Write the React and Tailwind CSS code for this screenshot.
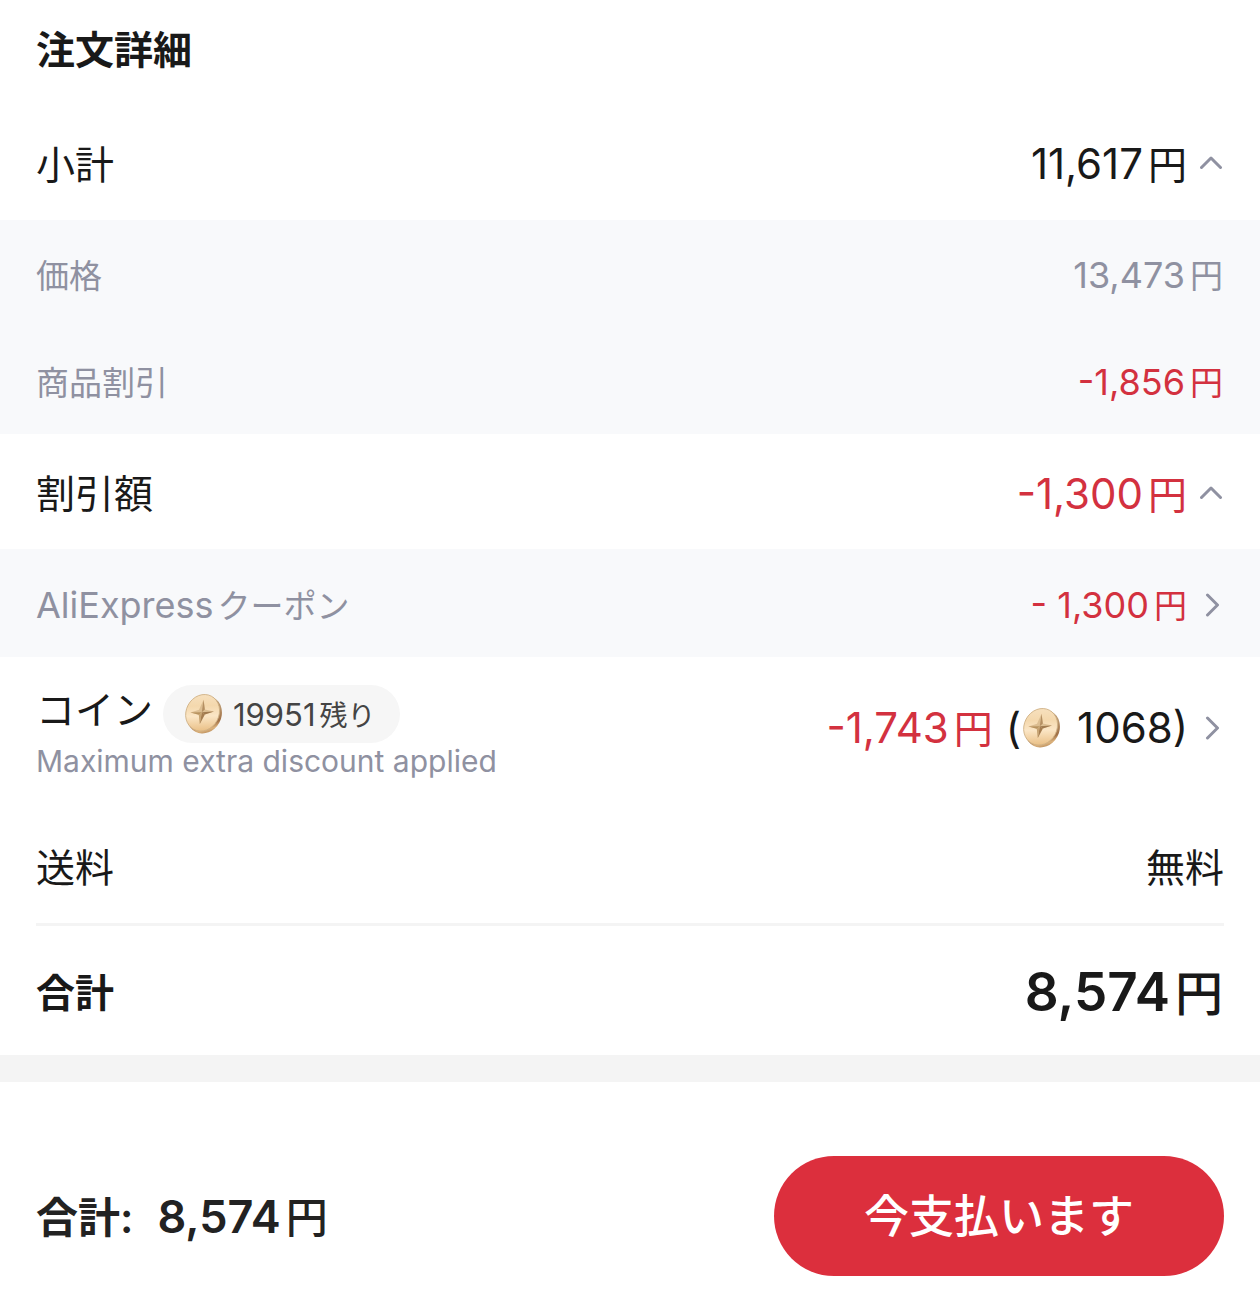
import React, { useId, useState } from 'react';

const CoinIcon = () => {
  const id = useId();

  return (
    <svg viewBox="0 0 40 42" className="h-[42px] w-10 shrink-0" aria-hidden="true">
      <defs>
        <linearGradient id={`${id}-edge`} x1="0.1" y1="0" x2="0.9" y2="1">
          <stop offset="0" stopColor="#b9a180" />
          <stop offset="0.45" stopColor="#b8946b" />
          <stop offset="0.7" stopColor="#a07046" />
          <stop offset="0.82" stopColor="#dcb27c" />
          <stop offset="1" stopColor="#94673c" />
        </linearGradient>
        <linearGradient id={`${id}-face`} x1="0.2" y1="0" x2="0.7" y2="1">
          <stop offset="0" stopColor="#f7e2c2" />
          <stop offset="0.35" stopColor="#f4d8ad" />
          <stop offset="0.6" stopColor="#fbe6c6" />
          <stop offset="1" stopColor="#e8bc80" />
        </linearGradient>
      </defs>
      {/* edge */}
      <ellipse cx="21.4" cy="21.6" rx="17" ry="19.4" transform="rotate(28 21.4 21.6)" fill={`url(#${id}-edge)`} />
      {/* face */}
      <ellipse cx="19.6" cy="19.8" rx="16.4" ry="18.8" transform="rotate(28 19.6 19.8)" fill={`url(#${id}-face)`} stroke="#cfb084" strokeWidth="0.8" />
      {/* star */}
      <path d="M20.6 6.8 L21.8 16.4 L31 18.6 L21.8 21.6 L16.8 31 L15.8 21.8 L7.4 19.4 L16 16.8 Z" fill="#dcbe92" />
      <path d="M20.6 6.8 L21.8 16.4 L18.8 19.2 Z" fill="#b48f62" />
      <path d="M31 18.6 L21.8 21.6 L18.8 19.2 Z" fill="#a07a4f" />
      <path d="M7.4 19.4 L15.8 21.8 L18.8 19.2 Z" fill="#b8935f" />
      <path d="M16.8 31 L21.8 21.6 L18.8 19.2 Z" fill="#a57d50" />
      <path d="M16.8 31 L15.8 21.8 L18.8 19.2 Z" fill="#c7a473" />
    </svg>
  );
};

const ChevronUp = ({ open = true }) => (
  <svg
    viewBox="0 0 24 24"
    className={`h-6 w-6 shrink-0 ${open ? '' : 'rotate-180'}`}
    fill="none"
    stroke="#8f91a1"
    strokeWidth="3"
    strokeLinecap="round"
    strokeLinejoin="round"
    aria-hidden="true"
  >
    <path d="M1.5 15.5 L11 6 L20.5 15.5" />
  </svg>
);

const ChevronRight = () => (
  <svg
    viewBox="0 0 24 24"
    className="h-6 w-6 shrink-0"
    fill="none"
    stroke="#8f91a1"
    strokeWidth="3"
    strokeLinecap="round"
    strokeLinejoin="round"
    aria-hidden="true"
  >
    <path d="M7.5 2 L17.5 12 L7.5 22" />
  </svg>
);

const Amount = ({ value, className, unitClass }) => (
  <span className={`flex items-baseline gap-[5px] pr-px whitespace-pre ${className}`}>
    <span>{value}</span>
    <span className={unitClass}>円</span>
  </span>
);

const SubRow = ({ label, children }) => (
  <div className="flex h-[107px] items-baseline justify-between px-9 pt-[37px] text-[#8f91a1]">
    <span className="text-[33px]">{label}</span>
    {children}
  </div>
);

const App = () => {
  const [subtotalOpen, setSubtotalOpen] = useState(true);
  const [discountOpen, setDiscountOpen] = useState(true);

  return (
    <main
      lang="ja"
      className="bg-white font-['Inter','Noto_Sans_CJK_JP',sans-serif] leading-none text-[#191919]"
    >
      <section>
        <h1 className="flex h-[108px] items-center px-9 pb-2.5 text-[39px] font-bold">注文詳細</h1>

        {/* Subtotal */}
        <button
          type="button"
          aria-expanded={subtotalOpen}
          onClick={() => setSubtotalOpen(!subtotalOpen)}
          className="flex h-[112px] w-full items-center justify-between px-9"
        >
          <span className="text-[39px]">小計</span>
          <span className="flex items-center gap-3">
            <Amount value="11,617" className="text-[42px]" unitClass="text-[39px]" />
            <ChevronUp open={subtotalOpen} />
          </span>
        </button>
        {subtotalOpen && (
          <div className="bg-[#f8f9fb]">
            <SubRow label="価格">
              <Amount value="13,473" className="text-[36px]" unitClass="text-[33px]" />
            </SubRow>
            <SubRow label="商品割引">
              <Amount value="-1,856" className="text-[36px] text-[#d3313f]" unitClass="text-[33px]" />
            </SubRow>
          </div>
        )}

        {/* Discounts */}
        <button
          type="button"
          aria-expanded={discountOpen}
          onClick={() => setDiscountOpen(!discountOpen)}
          className="flex h-[115px] w-full items-center justify-between px-9 pt-1"
        >
          <span className="text-[39px]">割引額</span>
          <span className="flex items-center gap-3">
            <Amount value="-1,300" className="text-[42px] text-[#d3313f]" unitClass="text-[39px]" />
            <ChevronUp open={discountOpen} />
          </span>
        </button>
        {discountOpen && (
          <button
            type="button"
            className="flex h-[108px] w-full items-center justify-between bg-[#f8f9fb] px-9 pt-1 text-[#8f91a1]"
          >
            <span className="flex items-baseline gap-1">
              <span className="text-[36px]">AliExpress</span>
              <span className="text-[33px]">クーポン</span>
            </span>
            <span className="flex items-center gap-3">
              <Amount value="- 1,300" className="text-[36px] text-[#d3313f]" unitClass="text-[33px]" />
              <ChevronRight />
            </span>
          </button>
        )}

        {/* Coins */}
        <button type="button" className="flex h-[142px] w-full items-center justify-between px-9">
          <span className="flex flex-col items-start pt-2">
            <span className="flex items-start gap-2.5">
              <span className="text-[39px] leading-[50px]">コイン</span>
              <span className="flex h-[58px] items-center gap-2.5 rounded-full bg-[#f6f6f6] pr-6 pl-5 text-[#444444]">
                <CoinIcon />
                <span className="flex items-baseline gap-1">
                  <span className="text-[31px]">19951</span>
                  <span className="text-[28px]">残り</span>
                </span>
              </span>
            </span>
            <span className="text-[30px] leading-9 text-[#8f91a1]">Maximum extra discount applied</span>
          </span>
          <span className="flex items-center gap-3">
            <span className="flex items-center text-[42px]">
              <Amount value="-1,743" className="text-[#d3313f]" unitClass="text-[39px]" />
              <span className="ml-3">(</span>
              <CoinIcon />
              <span className="ml-4">1068)</span>
            </span>
            <ChevronRight />
          </span>
        </button>

        {/* Shipping */}
        <div className="px-9">
          <div className="flex h-[127px] items-center justify-between border-b-3 border-[#f4f4f4] pt-3 text-[39px]">
            <span>送料</span>
            <span>無料</span>
          </div>
        </div>

        {/* Total */}
        <div className="flex h-[129px] items-center justify-between px-9 pt-1 font-bold">
          <span className="text-[39px]">合計</span>
          <Amount value="8,574" className="text-[53px] font-semibold" unitClass="text-[48px] font-medium" />
        </div>
      </section>

      <div className="h-[27px] bg-[#f4f4f4]" />

      <footer className="flex items-center justify-between px-9 pt-[74px] pb-9 text-[#222222]">
        <div className="flex items-baseline gap-6 font-semibold">
          <span className="text-[42px]">合計:</span>
          <Amount value="8,574" className="text-[45px]" unitClass="text-[42px] font-medium" />
        </div>
        <button
          type="button"
          className="h-[120px] w-[450px] rounded-full bg-[#dc2f3d] text-[45px] font-medium text-white"
        >
          今支払います
        </button>
      </footer>
    </main>
  );
};

export default App;
